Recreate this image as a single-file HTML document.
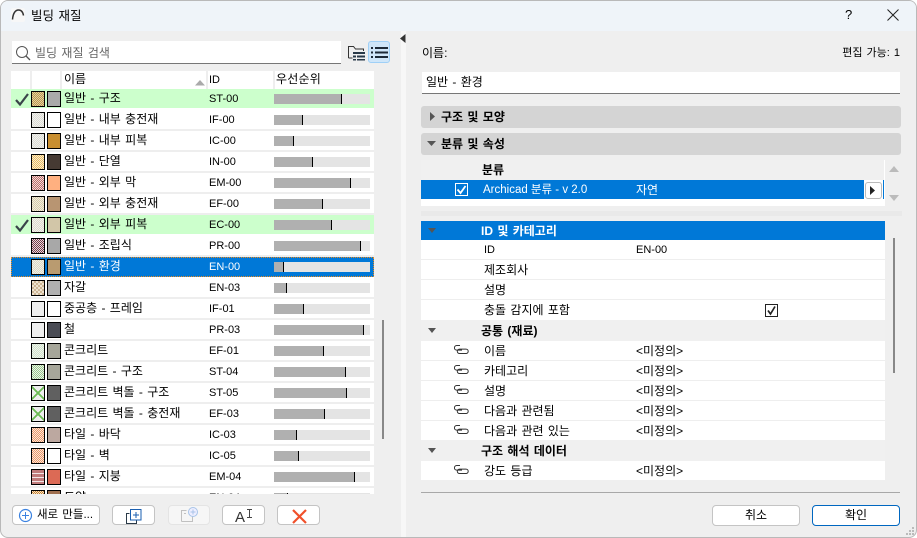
<!DOCTYPE html>
<html lang="ko"><head><meta charset="utf-8"><title>빌딩 재질</title>
<style>
*{box-sizing:border-box}
html,body{margin:0;padding:0;width:917px;height:538px;overflow:hidden;background:#fff}
body{font:12px/18px "Liberation Sans","Noto Sans CJK KR",sans-serif;word-spacing:1px;color:#000;position:relative}
#w{position:absolute;left:0;top:0;width:917px;height:538px;background:#efefef;border:1px solid #b9b9b9;border-radius:8px;overflow:hidden}
.a{position:absolute;white-space:nowrap}
#list{position:absolute;left:10px;top:88px;width:363px;height:405px;overflow:hidden;background:#fff}
.r{position:absolute;left:0;width:363px;height:21px;border-bottom:2px solid #eee;background:#fff}
.r.g{background:#ccffcc;border-bottom-color:#fff}
.r.s{background:#0078d7;color:#fff;outline:1px dotted #e88a20;outline-offset:-1px;border:0;height:20px}
.sw{position:absolute;top:2px;height:16px;width:14px;border:1px solid #000}
.s1{left:20px;background:repeating-conic-gradient(var(--c) 0 25%,var(--b) 0 50%) 0 0/var(--z,2px) var(--z,2px)}
.s2{left:36px}
.n{position:absolute;left:53px;top:0}
.i{position:absolute;left:198px;top:1px;font-size:11px}
.bar{position:absolute;left:263px;top:5px;width:96px;height:10px;background:#e4e4e4}
.bar b{display:block;height:10px;background:#b0b0b0;border-right:1px solid #000}
.ck{position:absolute;left:4px;top:4px}
.sec{position:absolute;left:421px;width:480px;height:22px;background:#d4d4d4;border-radius:3px;font-weight:700;padding:2px 0 0 20px;line-height:19px}
.row{position:absolute;left:420px;width:464px;height:20px;background:#fff;border-bottom:1px solid #eee}
.row.h{background:#f0f0f0;border:0;height:21px;font-weight:700}
.l{position:absolute;left:63px;top:1px}
.h .l{left:60px;top:2px}
.v{position:absolute;left:215px;top:1px}
.tri{position:absolute;left:7px;top:8px;width:0;height:0;border:5px solid transparent;border-top:5px solid #555;border-bottom:0;border-left-width:4px;border-right-width:4px}
.lnk{position:absolute;left:33px;top:4px}
.btn{position:absolute;height:20px;background:#fff;border:1px solid #c4c4c4;border-radius:4px;text-align:center;line-height:18px}
.x{background:linear-gradient(45deg,transparent 45%,#6cbb55 45% 55%,transparent 55%) 0 0/12px 14px,linear-gradient(-45deg,transparent 45%,#6cbb55 45% 55%,transparent 55%) 0 0/12px 14px,#eee}
</style></head><body>
<div id="w">
<div class="a" style="left:-1px;top:-1px;width:917px;height:31px;background:#eff4f9"></div>
<svg class="a" style="left:9px;top:6px" width="16" height="16" viewBox="0 0 16 16"><rect x="1" y="1" width="14" height="14" rx="2" fill="#f7f7f7"/><path d="M2.500 12.500C3 6 5.500 3 8.500 3S13 5.500 13.500 8.500" fill="none" stroke="#333" stroke-width="1.500"/></svg>
<div class="a" style="left:30px;top:6px;font-size:12.5px">빌딩 재질</div>
<div class="a" style="left:844px;top:5px;font-size:13px">?</div>
<svg class="a" style="left:886px;top:8px" width="12" height="12" viewBox="0 0 12 12"><path d="M.5.5l11 11M11.500.5l-11 11" stroke="#222" fill="none"/></svg>

<div class="a" style="left:400px;top:30px;width:5px;height:508px;background:#f7f7f7"></div>
<svg class="a" style="left:399px;top:33px" width="6" height="10"><path d="M5.500 0v9L0 4.500z" fill="#333"/></svg>

<div class="a" style="left:11px;top:40px;width:329px;height:23px;background:#fff;border-bottom:1px solid #777"></div>
<svg class="a" style="left:14px;top:44px" width="16" height="16" viewBox="0 0 16 16"><circle cx="7" cy="7" r="5.500" fill="none" stroke="#555"/><path d="M11 11l4 4" stroke="#555" stroke-width="1.300"/></svg>
<div class="a" style="left:34px;top:42px;color:#666;margin-top:1px">빌딩 재질 검색</div>
<svg class="a" style="left:347px;top:44px" width="18" height="16" viewBox="0 0 18 16"><path d="M.5 13V1.500h5l2 2.500h8v2M.5 13h4" fill="none" stroke="#333"/><path d="M5 7h12v2H5zM5 10.500h3v2H5zM9 10.500h8v2H9zM5 14h3v1.500H5zM9 14h8v1.500H9z" fill="#2a3a48"/></svg>
<div class="a" style="left:367px;top:40px;width:22px;height:22px;background:#cfe6f9;border:1px solid #9fd0f7;border-radius:3px"></div>
<svg class="a" style="left:370px;top:45px" width="17" height="13" viewBox="0 0 17 13"><path d="M0 1h2v2H0zM4 1h13v2H4zM0 5.500h2v2H0zM4 5.500h13v2H4zM0 10h2v2H0zM4 10h13v2H4z" fill="#1c2a38"/></svg>

<div class="a" style="left:10px;top:70px;width:363px;height:18px;background:#fff"></div>
<div class="a" style="left:29px;top:70px;width:2px;height:18px;background:#eee"></div>
<div class="a" style="left:59px;top:70px;width:2px;height:18px;background:#eee"></div>
<div class="a" style="left:205px;top:70px;width:2px;height:18px;background:#eee"></div>
<div class="a" style="left:272px;top:70px;width:2px;height:18px;background:#eee"></div>
<div class="a" style="left:63px;top:69px">이름</div>
<svg class="a" style="left:194px;top:79px" width="10" height="6"><path d="M5 0l5 5.500H0z" fill="#aaa"/></svg>
<div class="a" style="left:208px;top:70px;font-size:11px">ID</div>
<div class="a" style="left:275px;top:69px;letter-spacing:.2px">우선순위</div>

<div id="list">
<div class="r g" style="top:0"><svg class="ck" width="14" height="13" viewBox="0 0 14 13"><path d="M1 7l4 4.500L13 1" fill="none" stroke="#3a444a" stroke-width="2.200"/></svg><i class="sw s1" style="--c:#b89850;--b:#e4cfa0"></i><i class="sw s2" style="background:#aaa"></i><span class="n">일반 - 구조</span><span class="i">ST-00</span><i class="bar"><b style="width:68px"></b></i></div>
<div class="r" style="top:21px"><i class="sw s1" style="--c:#dcdcd2;--b:#f0f0f0"></i><i class="sw s2" style="background:#fff"></i><span class="n">일반 - 내부 충전재</span><span class="i">IF-00</span><i class="bar"><b style="width:29px"></b></i></div>
<div class="r" style="top:42px"><i class="sw s1" style="--c:#dcdcd2;--b:#f0f0f0"></i><i class="sw s2" style="background:#c98f30"></i><span class="n">일반 - 내부 피복</span><span class="i">IC-00</span><i class="bar"><b style="width:20px"></b></i></div>
<div class="r" style="top:63px"><i class="sw s1" style="--c:#eabb60;--b:#f7ecd4"></i><i class="sw s2" style="background:#463a33"></i><span class="n">일반 - 단열</span><span class="i">IN-00</span><i class="bar"><b style="width:39px"></b></i></div>
<div class="r" style="top:84px"><i class="sw s1" style="--c:#bc6c6c;--b:#f3dcd6"></i><i class="sw s2" style="background:#ffb080"></i><span class="n">일반 - 외부 막</span><span class="i">EM-00</span><i class="bar"><b style="width:77px"></b></i></div>
<div class="r" style="top:105px"><i class="sw s1" style="--c:#d8cca8;--b:#f0ece0"></i><i class="sw s2" style="background:#b89572"></i><span class="n">일반 - 외부 충전재</span><span class="i">EF-00</span><i class="bar"><b style="width:49px"></b></i></div>
<div class="r g" style="top:126px"><svg class="ck" width="14" height="13" viewBox="0 0 14 13"><path d="M1 7l4 4.500L13 1" fill="none" stroke="#3a444a" stroke-width="2.200"/></svg><i class="sw s1" style="--c:#dedac8;--b:#f0f0f0"></i><i class="sw s2" style="background:#d2c6a8"></i><span class="n">일반 - 외부 피복</span><span class="i">EC-00</span><i class="bar"><b style="width:58px"></b></i></div>
<div class="r" style="top:147px"><i class="sw s1" style="--c:#7a3a4a;--b:#e4dcdc"></i><i class="sw s2" style="background:#a8a8a8"></i><span class="n">일반 - 조립식</span><span class="i">PR-00</span><i class="bar"><b style="width:87px"></b></i></div>
<div class="r s" style="top:168px"><i class="sw s1" style="--c:#dcd8c0;--b:#f0f0ea"></i><i class="sw s2" style="background:#b99b70"></i><span class="n">일반 - 환경</span><span class="i">EN-00</span><i class="bar"><b style="width:10px"></b></i></div>
<div class="r" style="top:189px"><i class="sw s1" style="--c:#cdb594;--b:#ede2d0;--z:4px"></i><i class="sw s2" style="background:#b0b0b0"></i><span class="n">자갈</span><span class="i">EN-03</span><i class="bar"><b style="width:13px"></b></i></div>
<div class="r" style="top:210px"><i class="sw s1" style="--c:#efefef;--b:#efefef"></i><i class="sw s2" style="background:#fff"></i><span class="n">중공층 - 프레임</span><span class="i">IF-01</span><i class="bar"><b style="width:30px"></b></i></div>
<div class="r" style="top:231px"><i class="sw s1" style="--c:#efefef;--b:#efefef"></i><i class="sw s2" style="background:#4a4c55"></i><span class="n">철</span><span class="i">PR-03</span><i class="bar"><b style="width:90px"></b></i></div>
<div class="r" style="top:252px"><i class="sw s1" style="--c:#cfe5c8;--b:#f0f0f0"></i><i class="sw s2" style="background:#a6a69a"></i><span class="n">콘크리트</span><span class="i">EF-01</span><i class="bar"><b style="width:50px"></b></i></div>
<div class="r" style="top:273px"><i class="sw s1" style="--c:#98c88c;--b:#eef2ea"></i><i class="sw s2" style="background:#a6a69a"></i><span class="n">콘크리트 - 구조</span><span class="i">ST-04</span><i class="bar"><b style="width:72px"></b></i></div>
<div class="r" style="top:294px"><i class="sw s1 x"></i><i class="sw s2" style="background:#606060"></i><span class="n">콘크리트 벽돌 - 구조</span><span class="i">ST-05</span><i class="bar"><b style="width:73px"></b></i></div>
<div class="r" style="top:315px"><i class="sw s1 x"></i><i class="sw s2" style="background:#606060"></i><span class="n">콘크리트 벽돌 - 충전재</span><span class="i">EF-03</span><i class="bar"><b style="width:51px"></b></i></div>
<div class="r" style="top:336px"><i class="sw s1" style="--c:#ea9868;--b:#fbe6da"></i><i class="sw s2" style="background:#bca8a0"></i><span class="n">타일 - 바닥</span><span class="i">IC-03</span><i class="bar"><b style="width:23px"></b></i></div>
<div class="r" style="top:357px"><i class="sw s1" style="--c:#ea9868;--b:#fbe6da"></i><i class="sw s2" style="background:#fff"></i><span class="n">타일 - 벽</span><span class="i">IC-05</span><i class="bar"><b style="width:25px"></b></i></div>
<div class="r" style="top:378px"><i class="sw s1" style="background:repeating-linear-gradient(#c07b7b 0 3px,#f3e6e6 3px 4px)"></i><i class="sw s2" style="background:#dc6a55"></i><span class="n">타일 - 지붕</span><span class="i">EM-04</span><i class="bar"><b style="width:81px"></b></i></div>
<div class="r" style="top:399px"><i class="sw s1" style="--c:#c88030;--b:#f5e4c8"></i><i class="sw s2" style="background:#a07050"></i><span class="n">토양</span><span class="i">EN-04</span><i class="bar"><b style="width:14px"></b></i></div>
</div>
<div class="a" style="left:381px;top:319px;width:2px;height:119px;background:#888"></div>

<div class="btn" style="left:11px;top:504px;width:88px;padding-left:18px;white-space:nowrap;font-size:11.5px">새로 만들...</div>
<svg class="a" style="left:17px;top:507px" width="15" height="15" viewBox="0 0 15 15"><circle cx="7.500" cy="7.500" r="6" fill="none" stroke="#3b82e0" stroke-width="1.200"/><path d="M7.500 4v7M4 7.500h7" stroke="#3b82e0"/></svg>
<div class="btn" style="left:111px;top:504px;width:43px"></div>
<svg class="a" style="left:125px;top:508px" width="16" height="15" viewBox="0 0 16 15"><path d="M3.500 4.500H.5v10h10v-3" fill="none" stroke="#2a3a48"/><rect x="4.500" y=".5" width="10.500" height="10.500" fill="#fff" stroke="#1a5fb0"/><path d="M10 3v6M7 6h6" stroke="#1a5fb0"/></svg>
<div class="btn" style="left:167px;top:504px;width:42px;background:#f6f6f6;border-color:#e4e4e4"></div>
<svg class="a" style="left:180px;top:506px" width="17" height="15" viewBox="0 0 17 15"><path d="M.5 14.500v-11h5M.5 14.500h11v-5M3 6.500h2" fill="none" stroke="#c0c0c0"/><circle cx="12" cy="5" r="4.500" fill="#eef" stroke="#a8c4e8"/><path d="M12 2.500v5M9.500 5h5" stroke="#a8c4e8"/></svg>
<div class="btn" style="left:221px;top:504px;width:43px"></div>
<div class="a" style="left:234px;top:508px;font-size:15px;color:#333">A</div>
<svg class="a" style="left:246px;top:508px" width="6" height="9"><path d="M0 .5h5M2.500 .5v8M0 8.500h5" fill="none" stroke="#444"/></svg>
<div class="btn" style="left:276px;top:504px;width:43px"></div>
<svg class="a" style="left:291px;top:508px" width="15" height="15" viewBox="0 0 15 15"><path d="M1 1l13 13M14 1L1 14" stroke="#f0502a" stroke-width="2.200"/></svg>

<div class="a" style="left:421px;top:43px">이름:</div>
<div class="a" style="right:16px;top:43px;font-size:11px">편집 가능: 1</div>
<div class="a" style="left:421px;top:71px;width:478px;height:22px;background:#fff;border-bottom:1px solid #777;padding:1px 0 0 4px">일반 - 환경</div>
<div class="sec" style="left:420px;top:105px">구조 및 모양</div>
<svg class="a" style="left:429px;top:111px" width="6" height="9"><path d="M0 0l5 4.500L0 9z" fill="#555"/></svg>
<div class="sec" style="left:420px;top:132px">분류 및 속성</div>
<svg class="a" style="left:426px;top:140px" width="9" height="6"><path d="M0 0h9L4.500 5z" fill="#555"/></svg>

<div class="a" style="left:420px;top:159px;width:464px;height:46px;background:#f0f0f0;border-right:1px solid #fff"></div>
<div class="a" style="left:481px;top:160px;font-weight:700;line-height:19px">분류</div>
<div class="a" style="left:420px;top:179px;width:464px;height:19px;background:#fff"></div>
<div class="a" style="left:420px;top:179px;width:443px;height:19px;background:#0078d7"></div>
<div class="a" style="left:882px;top:179px;width:1px;height:19px;background:#0078d7"></div>
<div class="a" style="left:420px;top:198px;width:464px;height:7px;background:#fff"></div>
<svg class="a" style="left:454px;top:182px" width="13" height="13"><rect x=".5" y=".5" width="12" height="12" fill="#0078d7" stroke="#fff"/><path d="M2.500 6.500l3 3.500 5-7" fill="none" stroke="#fff" stroke-width="1.800"/></svg>
<div class="a" style="left:482px;top:180px;color:#fff;font-size:11.5px;word-spacing:0">Archicad 분류 - v 2.0</div>
<div class="a" style="left:635px;top:180px;color:#fff">자연</div>
<div class="a" style="left:864px;top:181px;width:17px;height:17px;background:#fff;border-radius:3px;border:1px solid #bbb"></div>
<svg class="a" style="left:869px;top:185px" width="6" height="9"><path d="M0 0l5 4.500L0 9z" fill="#222"/></svg>
<svg class="a" style="left:888px;top:165px" width="10" height="7"><path d="M5 0l5 6H0z" fill="#bbb"/></svg>
<svg class="a" style="left:888px;top:194px" width="10" height="7"><path d="M0 0h10L5 6z" fill="#bbb"/></svg>
<div class="a" style="left:420px;top:210px;width:481px;height:5px;background:#e9e9e9"></div>

<div class="a" style="left:420px;top:220px;width:464px;height:19px;background:#0078d7;color:#fff"><i class="tri" style="left:7px;top:7px"></i><span class="a" style="left:60px;top:1px;font-weight:700">ID 및 카테고리</span></div>
<div class="row" style="top:239px"><span class="l" style="font-size:11px">ID</span><span class="v" style="font-size:11px">EN-00</span></div>
<div class="row" style="top:259px"><span class="l">제조회사</span></div>
<div class="row" style="top:279px"><span class="l">설명</span></div>
<div class="row" style="top:299px;border:0"><span class="l">충돌 감지에 포함</span><svg class="a" style="left:344px;top:4px" width="13" height="13"><rect x=".5" y=".5" width="12" height="12" fill="#fff" stroke="#222"/><path d="M3 6.500l2.500 3.500L10 2.500" fill="none" stroke="#222" stroke-width="1.700"/></svg></div>
<div class="row h" style="top:319px"><i class="tri"></i><span class="l">공통 (재료)</span></div>
<div class="row" style="top:340px"><svg class="lnk" width="15" height="10" viewBox="0 0 15 10"><path d="M6 .5H2.700a2.300 2.300 0 000 4.600H8M5.500 8.500a2.200 2.200 0 010-4.400h6.500a2.200 2.200 0 010 4.400z" fill="none" stroke="#333"/></svg><span class="l">이름</span><span class="v">&lt;미정의&gt;</span></div>
<div class="row" style="top:360px"><svg class="lnk" width="15" height="10" viewBox="0 0 15 10"><path d="M6 .5H2.700a2.300 2.300 0 000 4.600H8M5.500 8.500a2.200 2.200 0 010-4.400h6.500a2.200 2.200 0 010 4.400z" fill="none" stroke="#333"/></svg><span class="l">카테고리</span><span class="v">&lt;미정의&gt;</span></div>
<div class="row" style="top:380px"><svg class="lnk" width="15" height="10" viewBox="0 0 15 10"><path d="M6 .5H2.700a2.300 2.300 0 000 4.600H8M5.500 8.500a2.200 2.200 0 010-4.400h6.500a2.200 2.200 0 010 4.400z" fill="none" stroke="#333"/></svg><span class="l">설명</span><span class="v">&lt;미정의&gt;</span></div>
<div class="row" style="top:400px"><svg class="lnk" width="15" height="10" viewBox="0 0 15 10"><path d="M6 .5H2.700a2.300 2.300 0 000 4.600H8M5.500 8.500a2.200 2.200 0 010-4.400h6.500a2.200 2.200 0 010 4.400z" fill="none" stroke="#333"/></svg><span class="l">다음과 관련됨</span><span class="v">&lt;미정의&gt;</span></div>
<div class="row" style="top:420px;border:0"><svg class="lnk" width="15" height="10" viewBox="0 0 15 10"><path d="M6 .5H2.700a2.300 2.300 0 000 4.600H8M5.500 8.500a2.200 2.200 0 010-4.400h6.500a2.200 2.200 0 010 4.400z" fill="none" stroke="#333"/></svg><span class="l">다음과 관련 있는</span><span class="v">&lt;미정의&gt;</span></div>
<div class="row h" style="top:439px"><i class="tri"></i><span class="l">구조 해석 데이터</span></div>
<div class="row" style="top:460px;border:0;height:19px"><svg class="lnk" width="15" height="10" viewBox="0 0 15 10"><path d="M6 .5H2.700a2.300 2.300 0 000 4.600H8M5.500 8.500a2.200 2.200 0 010-4.400h6.500a2.200 2.200 0 010 4.400z" fill="none" stroke="#333"/></svg><span class="l">강도 등급</span><span class="v">&lt;미정의&gt;</span></div>
<div class="a" style="left:892px;top:237px;width:2px;height:135px;background:#888"></div>
<div class="a" style="left:420px;top:491px;width:479px;height:1px;background:#a8a8a8"></div>
<div class="btn" style="left:711px;top:504px;width:88px;height:21px;line-height:19px">취소</div>
<div class="btn" style="left:811px;top:504px;width:88px;height:21px;line-height:19px;border-color:#0067c0">확인</div>
<svg class="a" style="left:905px;top:526px" width="9" height="9"><path d="M6 0h2v2H6zM3 3h2v2H3zM6 3h2v2H6zM0 6h2v2H0zM3 6h2v2H3zM6 6h2v2H6z" fill="#bbb"/></svg>
</div>
</body></html>
